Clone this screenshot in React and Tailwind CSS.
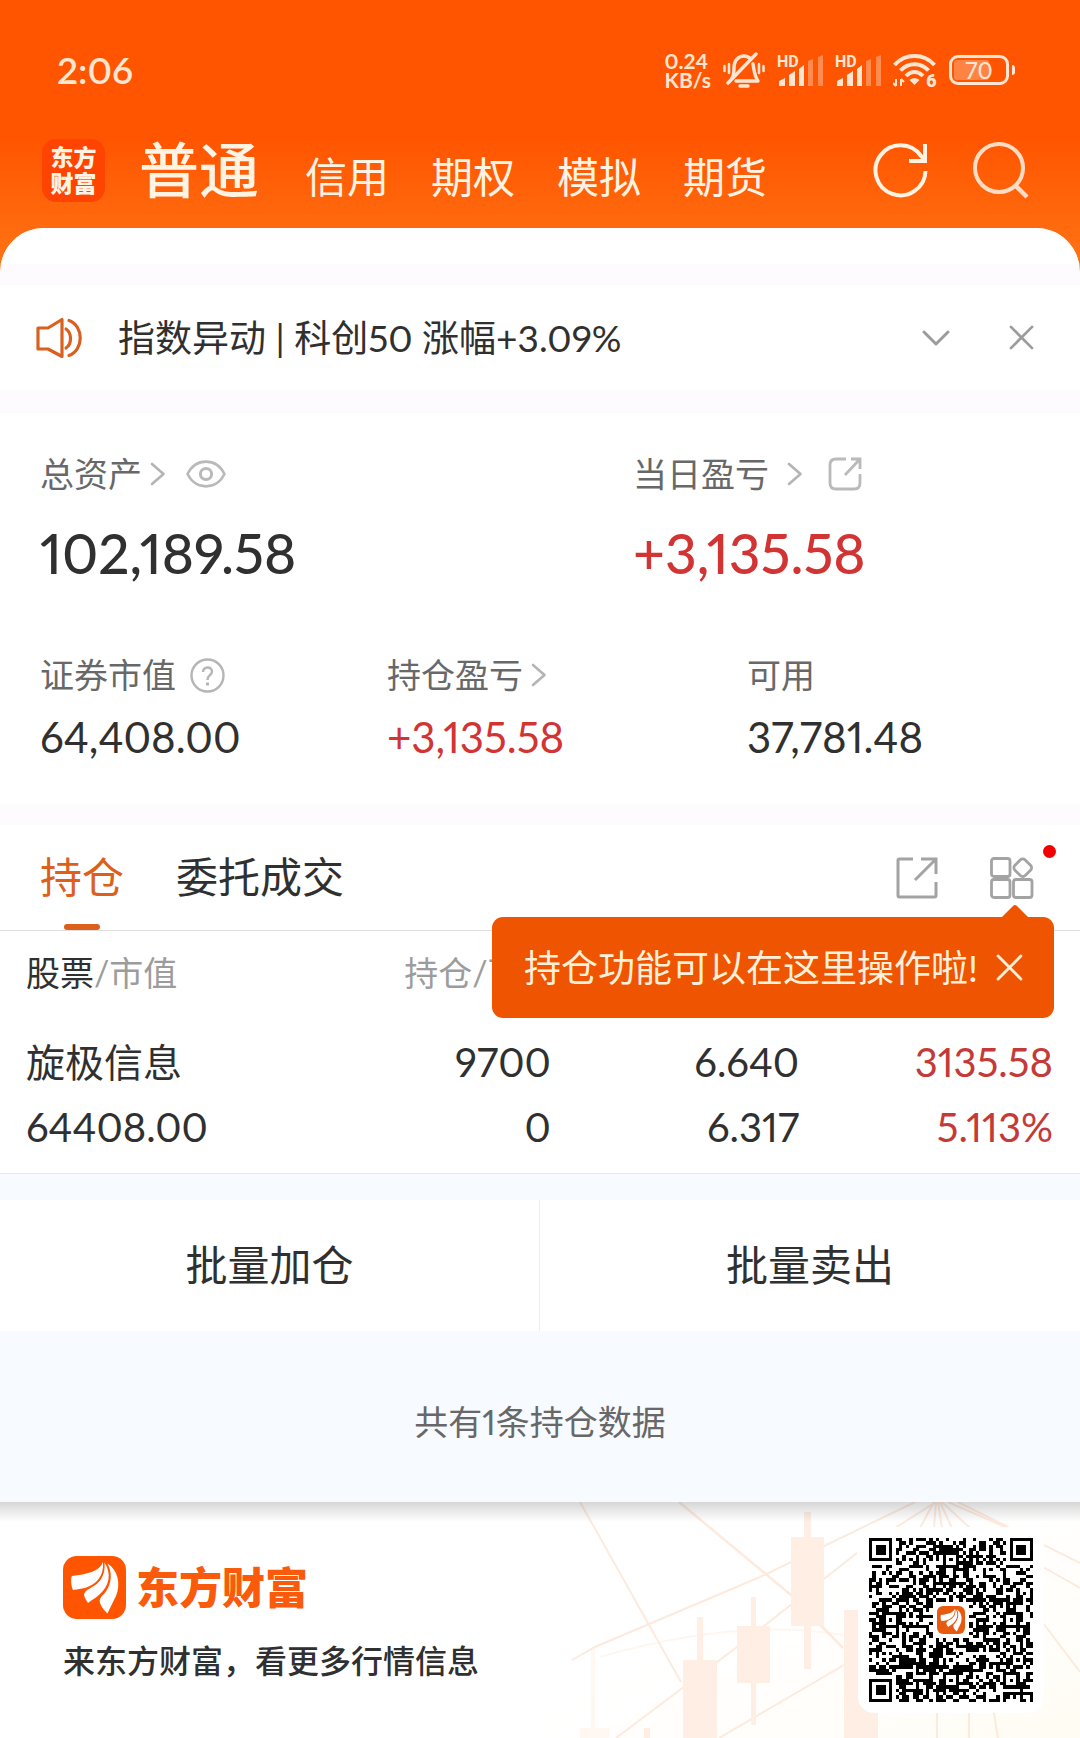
import React from "react";

const ORANGE = "#ff5400";

function NetworkSpeed() {
  return (
    <div className="text-[21px] leading-[19px] font-bold">
      <div>0.24</div>
      <div>KB/s</div>
    </div>
  );
}

function MutedBell() {
  return (
    <svg className="h-9 w-[42px]" viewBox="0 0 42 36" fill="none" stroke="currentColor" strokeWidth="3.400" strokeLinecap="round" strokeLinejoin="round">
      <path d="M9 26C11 23 11 20 11 16C11 8 16 4 21 4C24 4 26 5 28 7" />
      <path d="M30 12C31 17 31 23 35 29H13" />
      <path d="M33 2L5 31" />
      <path d="M17 34H25" />
      <path d="M6 12V21M36 12V21M1.500 14V19M40.500 14V19" strokeWidth="2.500" />
    </svg>
  );
}

function Signal() {
  return (
    <svg className="h-[34px] w-[46px]" viewBox="0 0 46 34" fill="currentColor">
      <text x="0" y="14" fontSize="16" fontWeight="700" fontFamily="Roboto, sans-serif">HD</text>
      <path d="M2 28L8 25V33H2Z" />
      <path d="M12 22L18 18V33H12Z" />
      <path d="M22 16L27 12V33H22Z" />
      <path d="M31 8L36 6V33H31Z" opacity=".38" />
      <path d="M41 4L46 2V33H41Z" opacity=".38" />
    </svg>
  );
}

function Wifi() {
  return (
    <svg className="h-[36px] w-[44px]" viewBox="0 0 44 36" fill="none" stroke="currentColor" strokeWidth="4">
      <path d="M1.500 13C12 1 31 1 41.500 13" />
      <path d="M7.500 18.500C15 10 28 10 35.500 18.500" />
      <path d="M13 24C18 18.500 25 18.500 30 24" />
      <path d="M21.500 33L16.500 28C19 25.500 24 25.500 26.500 28Z" fill="currentColor" stroke="none" />
      <path d="M3 27V34M0 31L3 34M8 34V27M8 27L11 30" strokeWidth="2" />
      <text x="33" y="35" fontSize="18" fontWeight="900" fontFamily="Roboto, sans-serif" fill="currentColor" stroke="none">6</text>
    </svg>
  );
}

function Battery() {
  return (
    <div className="flex items-center gap-[3px]">
      <div className="flex h-[30px] w-[60px] rounded-[9px] border-[3px] border-current p-[2px]">
        <div className="relative flex h-full w-full items-center justify-center">
          <div className="absolute inset-y-0 left-0 w-[70%] rounded-[3px] bg-[#ff8444]" />
          <span className="relative text-[23px] leading-5 font-medium">70</span>
        </div>
      </div>
      <div className="h-[10px] w-[3px] rounded-r bg-current" />
    </div>
  );
}

function RefreshIcon() {
  return (
    <svg className="size-[58px]" viewBox="0 0 58 58" fill="none" stroke="currentColor" strokeWidth="4">
      <path d="M53.500 30A25 25 0 1 1 49 15L53 19" />
      <path d="M53 3V20H37" />
    </svg>
  );
}

function SearchIcon() {
  return (
    <svg className="size-[58px]" viewBox="0 0 58 58" fill="none" stroke="currentColor" strokeWidth="4">
      <circle cx="27" cy="27" r="24" />
      <path d="M44 45L55 56" strokeWidth="4.500" />
    </svg>
  );
}

function SpeakerIcon() {
  return (
    <svg className="h-[42px] w-[46px]" viewBox="0 0 46 42" fill="none" stroke="#d9601f" strokeWidth="3.200" strokeLinejoin="round" strokeLinecap="round">
      <path d="M2 11H12L26 2.500V39.500L12 32H2Z" />
      <path d="M30 12C36 16 36 27 30 31" />
      <path d="M33 3.500C48 9 48 33 33 38.500" />
    </svg>
  );
}

function Chevron() {
  return (
    <svg className="h-6 w-4 shrink-0" viewBox="0 0 16 24" fill="none" stroke="#b4b4b4" strokeWidth="2.600" strokeLinecap="round" strokeLinejoin="round">
      <path d="M2 2L13.500 12L2 22" />
    </svg>
  );
}

function EyeIcon() {
  return (
    <svg className="h-7 w-10" viewBox="0 0 40 28" fill="none" stroke="#b9b9b9" strokeWidth="2.600">
      <path d="M1.500 14C10 -2.500 30 -2.500 38.500 14C30 30.500 10 30.500 1.500 14Z" />
      <circle cx="20" cy="14" r="5.600" strokeWidth="3" />
    </svg>
  );
}

function ShareRounded() {
  return (
    <svg className="size-[34px]" viewBox="0 0 34 34" fill="none" stroke="#bababa" strokeWidth="2.800">
      <path d="M18 2H8Q2 2 2 8V26Q2 32 8 32H26Q32 32 32 26V17" />
      <path d="M23 2H32V12M32 2L17 18" />
    </svg>
  );
}

function ShareSquare() {
  return (
    <svg className="size-[42px]" viewBox="0 0 42 42" fill="none" stroke="#a3a3a3" strokeWidth="3">
      <path d="M17 2H3.500Q2 2 2 3.500V38.500Q2 40 3.500 40H38.500Q40 40 40 38.500V25" />
      <path d="M25 2H40V17M40 2L19 23" />
    </svg>
  );
}

function GridIcon() {
  return (
    <svg className="h-[42px] w-[44px]" viewBox="0 0 44 42" fill="none" stroke="#a3a3a3" strokeWidth="2.800">
      <rect x="1.500" y="1.500" width="18.500" height="18" rx="2.500" />
      <rect x="1.500" y="22.500" width="18.500" height="18" rx="2.500" />
      <rect x="23.500" y="22.500" width="18.500" height="18" rx="2.500" />
      <rect x="25.500" y="3.500" width="14.500" height="14.500" rx="3.500" transform="rotate(45 32.750 10.750)" />
    </svg>
  );
}

function HelpIcon() {
  return (
    <svg className="size-[35px]" viewBox="0 0 35 35" fill="none" stroke="#b5b5b5" strokeWidth="2.400">
      <circle cx="17.500" cy="17.500" r="16" />
      <path d="M13 14C13 8 22 8 22 13.500C22 17 17.500 17 17.500 22" />
      <path d="M17.500 24.500V27.500" strokeWidth="3" />
    </svg>
  );
}

function CloseIcon({ className }) {
  return (
    <svg className={className} viewBox="0 0 26 26" fill="none" stroke="currentColor" strokeWidth="2.800" strokeLinecap="round">
      <path d="M2 2L24 24M24 2L2 24" />
    </svg>
  );
}

function BrandMark({ className, fill }) {
  return (
    <svg className={className} viewBox="0 0 63 63">
      <rect width="63" height="63" rx="14" fill={fill} />
      <g fill="#fff">
        <path d="M40 6C36 16 24 18 9 20C7.500 22 8 30 10 34C15 33 18 33 22 32C34 28 41 20 40 6Z" />
        <path d="M41.500 6.500C43 21 35 28 29 31C26 33 23 34 21 38C21 41 23 44 25 47C28 44 33 42 37 38C46 30 49 18 41.500 6.500Z" />
        <path d="M44.500 7.500C51 20 47 31 41 38C38 41 36 43 37 47C39 52 41 54 44.500 57.500C47 52 50 46 53 40C58 28 55 14 44.500 7.500Z" />
      </g>
    </svg>
  );
}

const QR_SIZE = 49;

function buildQr() {
  const n = QR_SIZE;
  let seed = 20817;
  const next = () => {
    seed = (seed * 1103515245 + 12345) % 2147483648;
    return seed / 2147483648;
  };
  const grid = Array.from({ length: n }, () => Array.from({ length: n }, () => next() < 0.51));
  const square = (cx, cy, r, rings) => {
    for (let y = -r; y <= r; y++) {
      for (let x = -r; x <= r; x++) {
        const row = cy + y;
        const col = cx + x;
        if (row < 0 || col < 0 || row >= n || col >= n) continue;
        grid[row][col] = rings.includes(Math.max(Math.abs(x), Math.abs(y)));
      }
    }
  };
  for (let i = 8; i < n - 8; i++) {
    grid[6][i] = i % 2 === 0;
    grid[i][6] = i % 2 === 0;
  }
  [[24, 6], [6, 24], [42, 24], [24, 42], [42, 42]].forEach(([x, y]) => square(x, y, 2, [0, 2]));
  [[3, 3], [n - 4, 3], [3, n - 4]].forEach(([x, y]) => square(x, y, 4, [0, 1, 3]));
  square(24, 24, 5, []);
  let d = "";
  grid.forEach((row, y) => row.forEach((on, x) => {
    if (on) d += `M${x} ${y}h1v1h-1z`;
  }));
  return d;
}

const QR_PATH = buildQr();

function QrCode() {
  return (
    <div className="relative rounded-2xl bg-white p-[11px]">
      <svg className="size-[164px]" viewBox="0 0 49 49" shapeRendering="crispEdges" role="img" aria-label="二维码">
        <path d={QR_PATH} fill="#000" />
      </svg>
      <div className="absolute inset-0 flex items-center justify-center">
        <BrandMark className="size-7" fill="#e85a10" />
      </div>
    </div>
  );
}

function FooterArt() {
  return (
    <svg className="absolute right-0 bottom-0 h-[236px] w-[540px]" viewBox="0 0 540 236">
      <defs>
        <linearGradient id="warm" x1="0" y1="0" x2="1" y2="1">
          <stop offset="0.450" stopColor="#fffdf8" stopOpacity="0" />
          <stop offset="1" stopColor="#fffcf3" />
        </linearGradient>
      </defs>
      <rect width="540" height="236" fill="url(#warm)" />
      <g stroke="#fdeadd" strokeWidth="2" fill="none">
        <path d="M139 0L251 93L303 146" strokeWidth="2.500" />
        <path d="M40 0L141 180" />
        <path d="M32 158L55 145L220 75L375 0" />
        <path d="M76 236L197 145L317 51" />
        <path d="M179 236L304 163" />
        <path d="M60 155Q200 115 303 133" opacity=".4" />
        <path d="M396 0L355 26M394 0L380 26M396 0L394 26M398 0L402 26M400 0L412 26M402 0L430 26M408 0L472 28M418 0L540 61" />
        <path d="M503 65L540 86M503 121L540 170M397 205V236M429 205V236M453 205L458 236" />
      </g>
      <g fill="#feeee3">
        <path d="M51 146H55V226H69V236H40V226H51Z" opacity=".45" />
        <path d="M104 226H110V236H104Z" />
        <path d="M157 115H163V158H177V236H143V158H157Z" />
        <path d="M211 95H216V124H230V181H216V223H211V181H197V124H211Z" />
        <path d="M264 10H271V35H284V124H271V167H264V124H251V35H264Z" />
        <path d="M304 108H338V236H304Z" />
      </g>
    </svg>
  );
}

const ACCOUNTS = ["信用", "期权", "模拟", "期货"];

function Header() {
  return (
    <header className="bg-linear-to-b from-[#ff5400] from-50% to-[#ff7414] pb-11 text-[#fff3e4]">
      <div className="flex h-[92px] items-center justify-between pt-[48px] pr-[65px] pl-[57px] text-[#ffe6d2]">
        <time className="text-[37px] leading-[44px] font-semibold">2:06</time>
        <div className="flex items-center gap-3">
          <NetworkSpeed />
          <MutedBell />
          <Signal />
          <Signal />
          <Wifi />
          <Battery />
        </div>
      </div>
      <div className="mt-[34px] mb-[14px] flex h-[88px] items-center justify-between px-[42px]">
        <div className="flex items-center gap-[34px]">
          <div className="flex size-[63px] flex-col items-center justify-center rounded-[14px] bg-[#ff4300] text-[23px] leading-[26px] font-black">
            <span>东方</span>
            <span>财富</span>
          </div>
          <nav className="flex items-baseline gap-[42px] pt-[6px] text-[42px] leading-[88px]">
            <button type="button" className="pr-1 text-[60px] font-medium">普通</button>
            {ACCOUNTS.map((name) => (
              <button type="button" key={name}>{name}</button>
            ))}
          </nav>
        </div>
        <div className="flex items-center gap-[42px] pr-[8px]">
          <button type="button" aria-label="刷新"><RefreshIcon /></button>
          <button type="button" aria-label="搜索" className="text-[#ffdcc4]"><SearchIcon /></button>
        </div>
      </div>
    </header>
  );
}

function Notice() {
  return (
    <section className="flex h-[105px] items-center bg-white px-[36px]">
      <SpeakerIcon />
      <p className="ml-9 flex-1 text-[37px] leading-[48px]">指数异动 | 科创50 涨幅+3.09%</p>
      <button type="button" aria-label="展开" className="mr-[59px]">
        <svg className="h-[18px] w-7" viewBox="0 0 28 18" fill="none" stroke="#9c9c9c" strokeWidth="3" strokeLinecap="round" strokeLinejoin="round">
          <path d="M2 3L14 15L26 3" />
        </svg>
      </button>
      <button type="button" aria-label="关闭" className="mr-[10px] text-[#9c9c9c]">
        <CloseIcon className="size-[25px]" />
      </button>
    </section>
  );
}

function Stat({ label, value, extra, large, up }) {
  return (
    <div>
      <div className="flex h-12 items-center text-[34px] leading-[48px] text-[#686868]">
        <span>{label}</span>
        {extra}
      </div>
      <div
        className={
          (large ? "mt-[22px] mb-[2px] text-[55px] leading-[66px] font-medium " : "mt-[10px] text-[42px] leading-[56px] ") +
          (up ? "text-[#d23434]" : "text-[#303030]")
        }
      >
        {value}
      </div>
    </div>
  );
}

function Assets() {
  return (
    <section className="bg-white px-[40px] pt-[37px] pb-[39px]">
      <div className="grid grid-cols-[593fr_407fr]">
        <Stat
          large
          label="总资产"
          value="102,189.58"
          extra={
            <div className="ml-2 flex items-center gap-5">
              <Chevron />
              <button type="button" aria-label="隐藏金额"><EyeIcon /></button>
            </div>
          }
        />
        <Stat
          large
          up
          label="当日盈亏"
          value="+3,135.58"
          extra={
            <div className="ml-[18px] flex items-center gap-[25px]">
              <Chevron />
              <button type="button" aria-label="分享当日盈亏"><ShareRounded /></button>
            </div>
          }
        />
      </div>
      <div className="mt-[63px] grid grid-cols-[347fr_360fr_293fr]">
        <Stat
          label="证券市值"
          value="64,408.00"
          extra={<button type="button" aria-label="说明" className="ml-[14px]"><HelpIcon /></button>}
        />
        <Stat up label="持仓盈亏" value="+3,135.58" extra={<div className="ml-2"><Chevron /></div>} />
        <Stat label="可用" value="37,781.48" />
      </div>
    </section>
  );
}

function Tip() {
  return (
    <div className="absolute top-[92px] right-[26px] z-10 flex h-[101px] items-center gap-[18px] rounded-[11px] bg-[#ef5400] pr-[31px] pl-8 text-[#fff0dc]">
      <svg className="absolute right-[26px] bottom-full h-3 w-[26px]" viewBox="0 0 26 12" fill="#ef5400">
        <path d="M0 12L11 1Q13 -1 15 1L26 12Z" />
      </svg>
      <span className="text-[37px] leading-[48px] whitespace-nowrap">持仓功能可以在这里操作啦!</span>
      <button type="button" aria-label="关闭提示">
        <CloseIcon className="size-[27px]" />
      </button>
    </div>
  );
}

function Holdings() {
  return (
    <section className="relative bg-white">
      <div className="flex h-[106px] justify-between border-b border-[#dedede] pr-[46px] pl-[40px]">
        <div className="flex gap-[52px] text-[42px]">
          <button type="button" className="relative h-full text-[#dc601c]">
            持仓
            <span className="absolute bottom-0 left-1/2 h-[6px] w-9 -translate-x-1/2 rounded-full bg-[#dc601c]" />
          </button>
          <button type="button" className="h-full">委托成交</button>
        </div>
        <div className="flex items-center gap-[52px]">
          <button type="button" aria-label="分享持仓"><ShareSquare /></button>
          <button type="button" aria-label="持仓功能" className="relative">
            <GridIcon />
            <span className="absolute -top-[12px] -right-[22px] size-[13px] rounded-full bg-[#f00000]" />
          </button>
        </div>
      </div>
      <Tip />
      <table className="w-full table-fixed border-b border-[#e6e9ec] text-right">
        <colgroup>
          <col className="w-[34%]" />
          <col className="w-[17%]" />
          <col className="w-[23%]" />
          <col />
        </colgroup>
        <thead>
          <tr className="h-[84px] text-[34px] leading-[48px] whitespace-nowrap text-[#9c9c9c]">
            <th scope="col" className="pl-[26px] text-left font-normal"><span className="text-[#303030]">股票</span>/市值</th>
            <th scope="col" className="text-left font-normal"><span className="ml-[37px]">持仓/可用</span></th>
            <th scope="col" aria-label="现价/成本" />
            <th scope="col" aria-label="盈亏" />
          </tr>
        </thead>
        <tbody>
          <tr className="text-[40px] leading-[65px]">
            <td className="pt-[15px] pb-[13px] pl-[26px] text-left">
              <div className="text-[39px]">旋极信息</div>
              <div>64408.00</div>
            </td>
            <td className="pt-[15px] pb-[13px]"><div>9700</div><div>0</div></td>
            <td className="pt-[15px] pb-[13px]"><div>6.640</div><div>6.317</div></td>
            <td className="pt-[15px] pr-[27px] pb-[13px] text-[#c43a38]"><div>3135.58</div><div>5.113%</div></td>
          </tr>
        </tbody>
      </table>
    </section>
  );
}

function Footer() {
  return (
    <footer className="relative bg-white">
      <FooterArt />
      <div className="absolute inset-x-0 top-0 h-5 bg-linear-to-b from-black/16 to-transparent" />
      <div className="relative flex items-center justify-between pt-[25px] pr-[36px] pb-[25px] pl-[63px]">
        <div>
          <div className="flex items-center gap-[10px]">
            <BrandMark className="size-[63px]" fill={ORANGE} />
            <span className="text-[43px] leading-[63px] font-black text-[#fa5a0c]">东方财富</span>
          </div>
          <p className="mt-[18px] text-[32px] leading-[48px] font-medium">来东方财富，看更多行情信息</p>
        </div>
        <QrCode />
      </div>
    </footer>
  );
}

export default function App() {
  return (
    <div className="min-h-screen bg-[#f7faff] font-['Lato','Noto_Sans_CJK_SC',sans-serif] text-[#303030] proportional-nums">
      <Header />
      <main className="-mt-11 overflow-hidden rounded-t-[44px] bg-[#fefbff]">
        <div className="h-9 bg-white" />
        <div className="h-[21px]" />
        <Notice />
        <div className="h-[23px]" />
        <Assets />
        <div className="h-[21px]" />
        <Holdings />
        <div className="bg-[#f7faff] pt-[26px]">
          <div className="grid h-[131px] grid-cols-2 bg-white text-[42px]">
            <button type="button" className="border-r border-[#ebeef2]">批量加仓</button>
            <button type="button">批量卖出</button>
          </div>
          <p className="pt-[72px] pb-[62px] text-center text-[34px] leading-[37px] text-[#686868]">共有1条持仓数据</p>
        </div>
      </main>
      <Footer />
    </div>
  );
}
